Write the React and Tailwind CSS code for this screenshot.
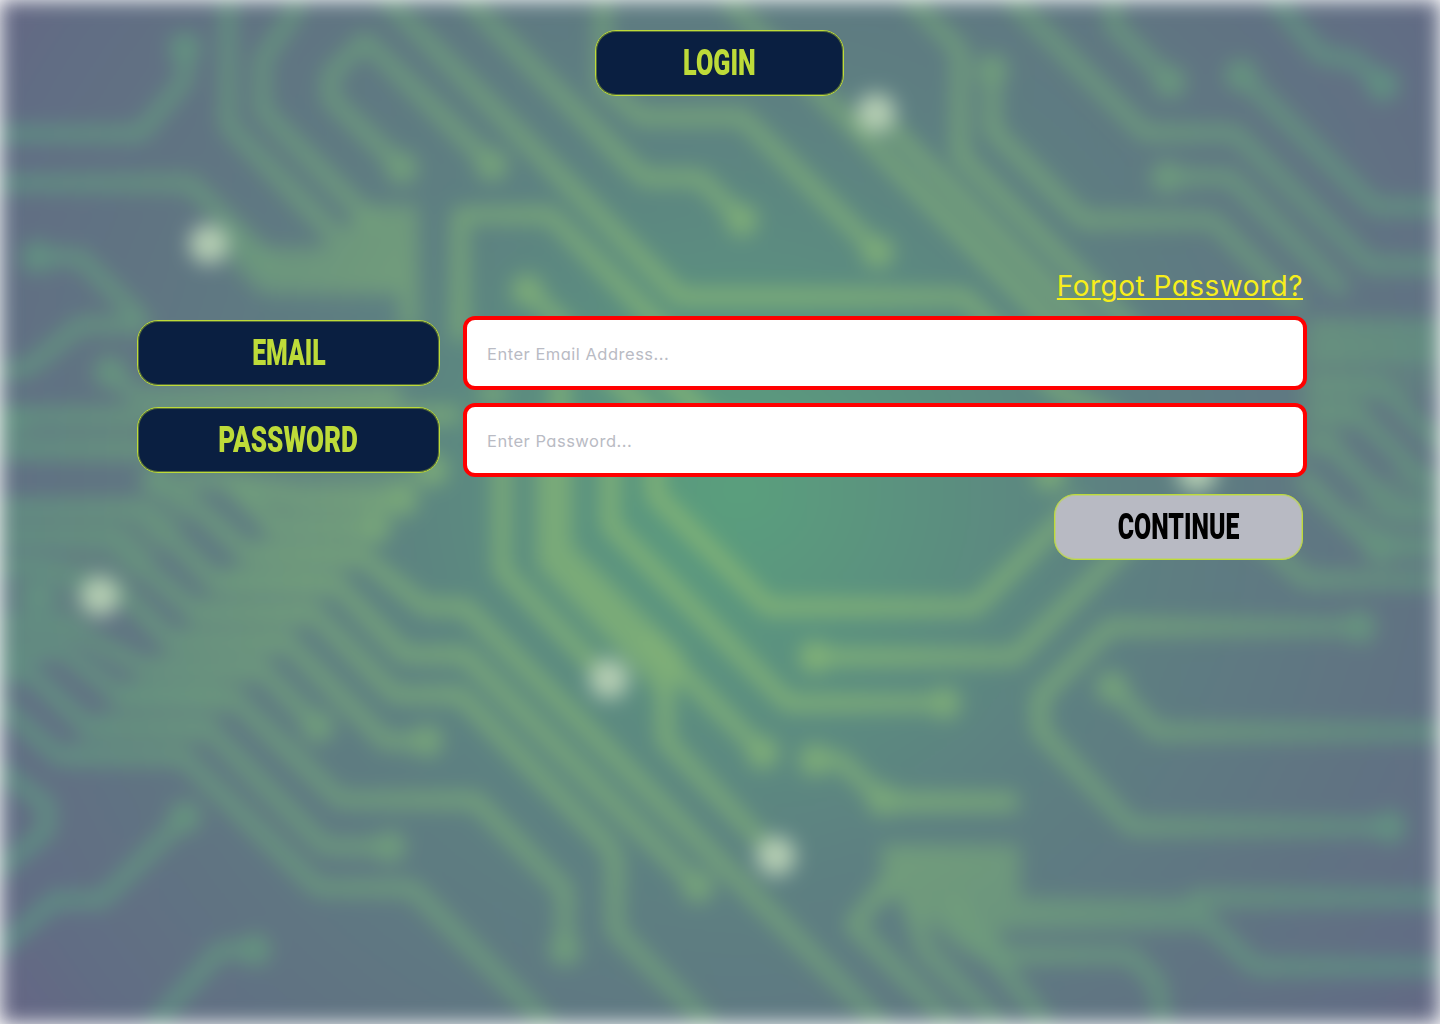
import React from "react";

const traces = [
  "M185 48V80L140 134H-30",
  "M-30 183H190L275 268",
  "M228 -30V125L335 235",
  "M300 -30L295 12L262 60V110L375 225",
  "M402 168L330 98V75L365 40L492 165",
  "M357 -30L680 297H965L1060 392L1120 420",
  "M437 -30L630 165L645 178H700L742 220",
  "M603 -30V85L640 117H742L878 252",
  "M697 -30L985 258L1090 363",
  "M880 117L1100 338",
  "M880 -30L960 50V155L1140 335",
  "M992 70V130L1083 220H1213L1300 307",
  "M982 -30L1145 133H1235L1370 265H1470",
  "M1113 -30L1113 25L1170 82",
  "M1250 -30L1320 55L1355 60L1383 85",
  "M1241 75L1375 207H1470",
  "M1167 177H1230L1345 292",
  "M37 257H80L140 318",
  "M-20 375L28 368L80 325H150",
  "M110 372L135 395H400",
  "M-20 415H460",
  "M-20 450H160",
  "M460 340V215H550L680 345",
  "M527 290L570 330",
  "M157 480L175 492L200 510L247 553H330",
  "M-20 508H140L170 537L213 580H320",
  "M-20 536H115L143 567L197 613H300",
  "M-20 566H40L125 595L172 642H290",
  "M-20 625H62L145 668H260",
  "M-20 650H62L117 693H220",
  "M-20 668L30 673L88 727H200",
  "M-20 688L0 705L60 757H183L318 888H412L570 1046",
  "M230 480L300 500H400",
  "M180 480L225 480L275 527H370",
  "M250 555H360L425 607H465L900 1042",
  "M220 583H335L405 655H465L698 887",
  "M200 613H313L395 695H460L608 845L615 860V930L720 1035",
  "M180 642H287L385 741H427",
  "M155 668H260L318 727",
  "M117 698H233L340 800H475L565 890V950",
  "M92 728H207L325 847H390",
  "M502 440V570L608 680",
  "M480 394H505",
  "M560 370V440",
  "M600 365L670 435",
  "M655 365L725 435",
  "M665 680V740L775 855",
  "M645 635L763 753",
  "M610 440V525L788 703H945",
  "M655 440V495L768 607H975L1080 502",
  "M815 657H1015L1150 522",
  "M1360 627H1110L1040 697V730L1132 827H1390",
  "M1112 687L1157 732H1470",
  "M815 760H840L883 800H1018",
  "M890 804H1018",
  "M890 880L853 925L970 1042",
  "M910 900L925 950L1010 1035",
  "M950 900L1060 1042",
  "M985 955H1130L1157 982L1167 1050",
  "M1190 898H1470",
  "M1200 915L1255 967H1470",
  "M185 817L102 900H55L-20 965",
  "M255 950H220L140 1040",
  "M-30 748L47 805V830L-30 895",
  "M1310 328H1470",
  "M1310 352H1470",
  "M1310 385H1380L1455 460",
  "M1310 412H1355L1425 480H1470",
  "M1310 443H1328L1395 510H1470",
  "M1300 475L1375 548H1470",
  "M1255 535L1305 580H1470",
];

const blocks = [
  "M225 225L250 248H320L370 205H418V330H400V294H262L230 262Z",
  "M536 440H572V545L685 655L675 690H655L536 565Z",
  "M882 845H1020V898H1205V930H1000L1010 975L960 950L905 900H882Z",
];

/* Bundles of parallel traces that run together into one tone. */
const bundles = [
  "M-20 410H140V460H-20Z",
  "M-20 498H200L172 540L125 590L62 648L0 700H-20Z",
  "M155 470H440L400 500L363 557L290 640L187 757H60L117 693L172 642L213 580L247 553L275 515L230 490Z",
  "M1300 320H1470V395H1380L1350 430L1310 460H1300Z",
  "M1395 470L1470 480V560H1375L1340 520Z",
];

const pads = [
  [185, 48], [402, 168], [492, 165], [742, 220], [878, 252], [992, 70], [1170, 82],
  [1383, 85], [1241, 75], [1167, 177], [37, 257], [110, 372], [527, 290], [10, 420],
  [157, 480], [375, 528], [402, 500], [432, 470], [38, 597], [318, 727], [427, 741],
  [390, 847], [565, 950], [698, 887], [763, 753], [815, 657], [945, 703], [815, 760],
  [883, 800], [1360, 627], [1390, 827], [1112, 687], [185, 817], [255, 950],
  [1380, 548], [1050, 475],
];

const lights = [
  [209, 244], [876, 113], [100, 596], [609, 679], [776, 856], [1197, 472],
];

function CircuitBackdrop() {
  return (
    <svg
      viewBox="0 0 1440 1024"
      preserveAspectRatio="none"
      className="absolute inset-0 h-full w-full blur-[10px]"
      aria-hidden="true"
    >
      <defs>
        <radialGradient id="board" gradientUnits="userSpaceOnUse" cx="740" cy="490" r="920">
          <stop offset="0" stopColor="#5a9f7d" />
          <stop offset="0.2" stopColor="#5b907f" />
          <stop offset="0.42" stopColor="#5d8081" />
          <stop offset="0.7" stopColor="#607482" />
          <stop offset="0.88" stopColor="#616d84" />
          <stop offset="1" stopColor="#666585" />
        </radialGradient>
        <radialGradient id="copper" gradientUnits="userSpaceOnUse" cx="740" cy="490" r="880">
          <stop offset="0" stopColor="#88b874" />
          <stop offset="0.25" stopColor="#80b077" />
          <stop offset="0.5" stopColor="#73a07b" />
          <stop offset="0.75" stopColor="#65937f" />
          <stop offset="1" stopColor="#5c8e86" />
        </radialGradient>
      </defs>
      <rect width="1440" height="1024" fill="url(#board)" />
      <svg width="1440" height="1024">
        <g fill="url(#copper)" opacity="0.4">
          {bundles.map((d) => (
            <path key={d} d={d} />
          ))}
        </g>
        <g fill="none" stroke="url(#copper)" strokeWidth="15.5" strokeLinejoin="round">
          {traces.map((d) => (
            <path key={d} d={d} />
          ))}
        </g>
        <g fill="url(#copper)">
          {blocks.map((d) => (
            <path key={d} d={d} opacity="0.8" />
          ))}
          {pads.map(([x, y]) => (
            <circle key={x + "-" + y} cx={x} cy={y} r="16" />
          ))}
        </g>
        <g fill="#b3ccb2">
          {lights.map(([x, y]) => (
            <circle key={x + "-" + y} cx={x} cy={y} r="20" />
          ))}
        </g>
      </svg>
    </svg>
  );
}

const plate =
  "flex h-[66px] shrink-0 items-center justify-center rounded-[21px] border border-[#bedb39] pb-0.5 shadow-[inset_0_0_0_1px_#bedb3966] font-[Roboto,sans-serif] text-[37px] leading-none font-black";

function Field({ label, labelScale, type, placeholder }) {
  return (
    <div className="flex items-center">
      <label htmlFor={type} className={plate + " mr-[23px] w-[303px] bg-[#0a1f41] text-[#bedb39]"}>
        <span className={labelScale}>{label}</span>
      </label>
      <input
        id={type}
        type={type}
        placeholder={placeholder}
        className="-my-1 h-[74px] w-[844px] rounded-[12px] border-4 border-[#ff0000] bg-white px-5 pt-px font-[Inter,sans-serif] text-[16.5px] tracking-[0.5px] text-black outline-none [font-feature-settings:'cv11'] placeholder:text-[#b9bbc4] placeholder:opacity-100"
      />
    </div>
  );
}

export default function App() {
  return (
    <div className="relative h-screen w-full overflow-hidden bg-white">
      <CircuitBackdrop />
      <main className="relative flex flex-col pt-[30px]">
        <h1 className={plate + " mr-px w-[249px] self-center bg-[#0a1f41] text-[#bedb39]"}>
          <span className="scale-x-[0.68]">LOGIN</span>
        </h1>
        <form className="ml-[137px] flex w-[1170px] flex-col pt-[170px]" onSubmit={(e) => e.preventDefault()}>
          <a
            href="#forgot"
            className="mr-1 flex h-[54px] items-start self-end pt-px font-[Inter,sans-serif] text-[28px] leading-[38px] font-normal tracking-[0.48px] whitespace-nowrap text-[#f7ee1b] underline decoration-[1.5px] underline-offset-[2px] [font-feature-settings:'cv11']"
          >
            Forgot Password?
          </a>
          <div className="flex flex-col gap-[21px]">
            <Field label="EMAIL" labelScale="scale-x-[0.67]" type="email" placeholder="Enter Email Address..." />
            <Field label="PASSWORD" labelScale="scale-x-[0.705]" type="password" placeholder="Enter Password..." />
          </div>
          <button type="submit" className={plate + " mt-[21px] mr-1 w-[249px] self-end bg-[#b8bac3] text-black"}>
            <span className="scale-x-[0.672]">CONTINUE</span>
          </button>
        </form>
      </main>
    </div>
  );
}
